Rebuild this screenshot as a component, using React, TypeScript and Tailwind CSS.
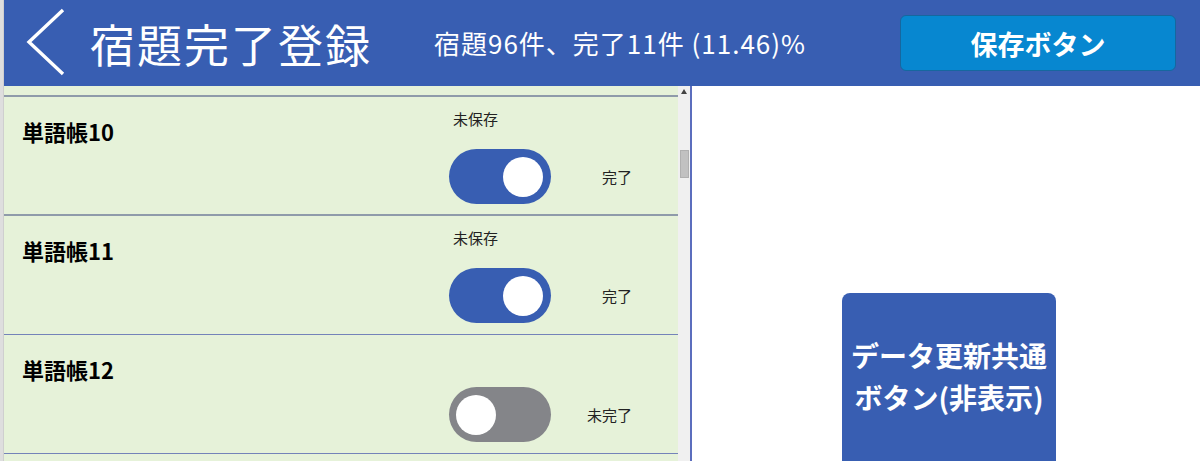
import React from "react";

type Item = {
  name: string;
  done: boolean;
  unsaved: boolean;
  border: "gray" | "blue";
};

const ITEMS: Item[] = [
  { name: "単語帳10", done: true, unsaved: true, border: "gray" },
  { name: "単語帳11", done: true, unsaved: true, border: "blue" },
  { name: "単語帳12", done: false, unsaved: false, border: "blue" },
];

const FONT = { fontFamily: '"Noto Sans CJK JP", "Noto Sans", sans-serif' };

function Toggle({ on }: { on: boolean }) {
  return (
    <div
      className={`w-[102px] h-[55px] rounded-full flex items-center ${
        on ? "bg-[#385eb2] justify-end pr-[8px]" : "bg-[#848589] justify-start pl-[7px]"
      }`}
    >
      <div className="w-[40px] h-[40px] rounded-full bg-white" />
    </div>
  );
}

function Row({ item }: { item: Item }) {
  return (
    <div
      className={`flex bg-[#e6f2d9] h-[119px] ${
        item.border === "gray"
          ? "border-b-2 border-[#8f9baa]"
          : "border-b border-[#7483b9]"
      }`}
    >
      <div className="w-[445px] pl-[18px] pt-[21px] text-[22px] leading-[26px] font-bold text-black">
        {item.name}
      </div>
      <div className="w-[102px] flex flex-col">
        <div className="h-[52px] pl-[4px] pt-[12px] text-[15px] leading-[19px] text-[#222]">
          {item.unsaved ? "未保存" : ""}
        </div>
        <Toggle on={item.done} />
      </div>
      <div className="w-[81px] pt-[70px] text-right text-[15px] leading-[19px] text-[#222]">
        {item.done ? "完了" : "未完了"}
      </div>
    </div>
  );
}

export default function App() {
  return (
    <div className="w-[1200px] h-[461px] flex overflow-hidden bg-white" style={FONT}>
      <div className="w-[4px] shrink-0 bg-[#dedede] border-r border-[#cfcfcf]" />
      <div className="flex-1 flex flex-col min-w-0">
        <header className="h-[86px] shrink-0 bg-[#385eb2] flex items-center text-white">
          <svg width="44" height="86" viewBox="0 0 44 86" className="ml-[20px] shrink-0">
            <polyline
              points="39,10 5,42 39,74"
              fill="none"
              stroke="#ffffff"
              strokeWidth="3.4"
            />
          </svg>
          <div className="w-[344px] ml-[22px] text-[45px] leading-none tracking-[2px]">宿題完了登録</div>
          <div className="text-[26px] leading-none tracking-[1px]">宿題96件、完了11件 (11.46)%</div>
          <button className="ml-auto mr-[24px] w-[276px] h-[56px] rounded-[6px] bg-[#0787d0] border border-[#16679f] text-white text-[27px] font-bold leading-none">
            保存ボタン
          </button>
        </header>

        <div className="flex flex-1 min-h-0">
          <div className="w-[674px] shrink-0 overflow-hidden">
            <div className="h-[11px] bg-[#e6f2d9] border-b-2 border-[#8f9baa]" />
            {ITEMS.map((item) => (
              <Row key={item.name} item={item} />
            ))}
            <div className="h-[20px] bg-[#e6f2d9]" />
          </div>

          <div className="w-[12px] shrink-0 bg-[#f0f0f0] flex flex-col items-center">
            <div className="mt-[3px] w-0 h-0 border-l-[3px] border-r-[3px] border-b-[5px] border-l-transparent border-r-transparent border-b-[#444]" />
            <div className="mt-[56px] w-[9px] h-[28px] bg-[#c1c1c1] border border-[#b0b0b0]" />
          </div>
          <div className="w-[2px] shrink-0 bg-[#5b6dbd]" />

          <div className="flex-1 pl-[150px] pt-[207px]">
            <div className="w-[214px] h-[190px] rounded-[8px] bg-[#385eb2] pt-[41px] text-center text-white text-[28px] font-bold leading-[42px]">
              データ更新共通
              <br />
              ボタン(非表示)
            </div>
          </div>
        </div>
      </div>
    </div>
  );
}
